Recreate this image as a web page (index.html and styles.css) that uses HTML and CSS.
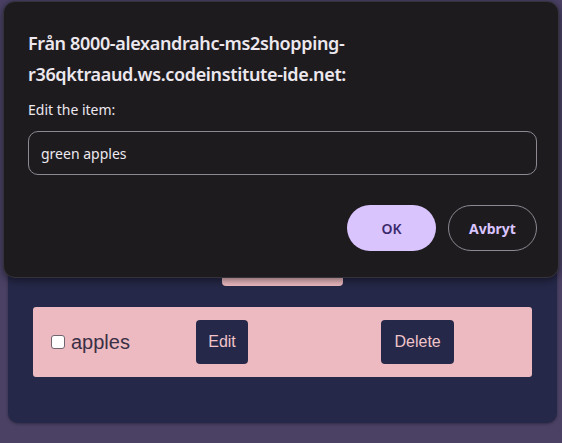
FILE: index.html
```html
<!DOCTYPE html>
<html lang="sv">
<head>
<meta charset="utf-8">
<title>Shopping list</title>
<link rel="stylesheet" href="styles.css">
</head>
<body>
<main class="card">
  <section class="form">
    <h1 class="heading">Shopping list</h1>
    <input class="new-item" type="text" value="">
    <button class="add-btn">Add</button>
  </section>
  <ul class="list">
    <li class="item">
      <label class="item-label"><input type="checkbox" class="check"><span>apples</span></label>
      <div class="cell"><button class="row-btn">Edit</button></div>
      <div class="cell"><button class="row-btn">Delete</button></div>
    </li>
  </ul>
</main>

<div class="dialog" role="dialog">
  <h2 class="dialog-title">Från 8000-alexandrahc-ms2shopping-<br>r36qktraaud.ws.codeinstitute-ide.net:</h2>
  <p class="dialog-msg">Edit the item:</p>
  <div class="dialog-input">green apples</div>
  <div class="dialog-actions">
    <button class="btn-ok">OK</button>
    <button class="btn-cancel">Avbryt</button>
  </div>
</div>
</body>
</html>
```
FILE: styles.css
```css
html, body {
  margin: 0;
  padding: 0;
}
body {
  background: #4a4165;
  padding: 8px 5px 8px 8px;
  height: 443px;
  box-sizing: border-box;
  font-family: "Liberation Sans", Arial, sans-serif;
  overflow: hidden;
}
.card {
  background: #252848;
  border-radius: 10px;
  padding: 0 25px 46px;
  box-shadow: 0 1px 3px rgba(0,0,0,0.35);
}
.form {
  height: 299px;
  display: flex;
  flex-direction: column;
  align-items: center;
  justify-content: flex-end;
  padding-bottom: 21px;
  box-sizing: border-box;
}
.heading {
  margin: 0 0 20px;
  color: #ecbac0;
  font-size: 28px;
}
.new-item {
  width: 300px;
  height: 36px;
  margin-bottom: 20px;
  border: none;
  border-radius: 4px;
}
.add-btn {
  width: 121px;
  height: 40px;
  background: #ecbac0;
  border: none;
  border-radius: 4px;
  color: #252848;
  font-size: 16px;
}
.list {
  list-style: none;
  margin: 0;
  padding: 0;
}
.item {
  height: 70px;
  background: #ecbac0;
  border-radius: 3px;
  display: grid;
  grid-template-columns: 145px 185px auto;
  align-items: center;
  padding: 0 18px;
}
.item-label {
  display: flex;
  align-items: center;
  font-size: 20px;
  color: #3a2f45;
}
.check {
  width: 14px;
  height: 14px;
  margin: 0 6px 0 0;
  appearance: none;
  background: #fff;
  border: 1px solid #6f6470;
  border-radius: 3px;
}
.row-btn {
  height: 44px;
  padding: 0 12px;
  min-width: 52px;
  background: #252848;
  color: #f0c4ca;
  border: none;
  border-radius: 4px;
  font-family: "Liberation Sans", Arial, sans-serif;
  font-size: 16px;
}
.cell:last-child .row-btn {
  padding: 0 13.5px;
}

/* dialog overlay */
.dialog {
  position: absolute;
  left: 3px;
  top: 1px;
  width: 556px;
  height: 277px;
  box-sizing: border-box;
  background: #1e1b1f;
  border: 1px solid #36323b;
  border-radius: 12px;
  padding: 26px 21px 0 24px;
  box-shadow: 0 2px 8px rgba(0,0,0,0.5);
  font-family: "Noto Sans", "Open Sans", sans-serif;
  color: #ece8ee;
}
.dialog-title {
  margin: 0;
  font-size: 18px;
  font-weight: 600;
  line-height: 31px;
  letter-spacing: -0.35px;
}
.dialog-msg {
  margin: 10px 0 11px;
  font-size: 14px;
  line-height: 20px;
}
.dialog-input {
  height: 44px;
  box-sizing: border-box;
  border: 1px solid #8d8891;
  border-radius: 10px;
  padding: 0 12px;
  display: flex;
  align-items: center;
  font-size: 14px;
}
.dialog-actions {
  display: flex;
  justify-content: flex-end;
  gap: 12px;
  margin-top: 30px;
}
.btn-ok, .btn-cancel {
  height: 46px;
  width: 89px;
  border-radius: 23px;
  font-family: "Noto Sans", "Open Sans", sans-serif;
  font-size: 14px;
  font-weight: 600;
}
.btn-ok {
  background: #d9c4fe;
  color: #3c2a6c;
  border: none;
}
.btn-cancel {
  background: transparent;
  color: #d9c4fe;
  border: 1px solid #8d8891;
  font-weight: 700;
}
```
